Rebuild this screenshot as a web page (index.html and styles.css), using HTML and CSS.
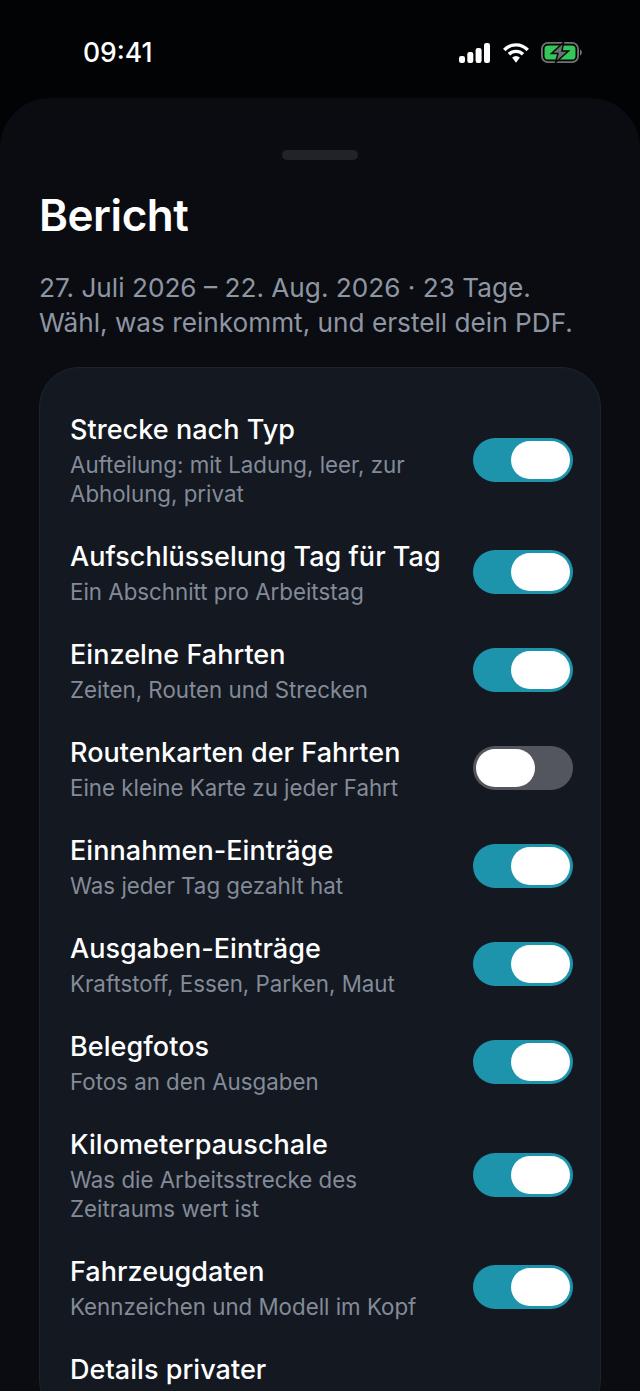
FILE: index.html
```html
<!DOCTYPE html>
<html lang="de">
<head>
    <meta charset="UTF-8">
    <meta name="viewport" content="width=device-width, initial-scale=1.0">
    <title>Bericht</title>
    <link rel="stylesheet" href="styles.css">
</head>
<body>
    <div class="status-bar">
        <span class="clock">09:41</span>
        <div class="status-icons">
            <svg width="31" height="20" viewBox="0 0 31 20">
                <rect x="0" y="13" width="6" height="7" rx="2.2" fill="#fff"/>
                <rect x="8.3" y="9" width="6" height="11" rx="2.2" fill="#fff"/>
                <rect x="16.6" y="5" width="6" height="15" rx="2.2" fill="#fff"/>
                <rect x="25" y="0" width="6" height="20" rx="2.2" fill="#fff"/>
            </svg>
            <svg width="26" height="20" viewBox="0 0 26 20">
                <path d="M1.3 7 A16 16 0 0 1 24.7 7" fill="none" stroke="#fff" stroke-width="3.4"/>
                <path d="M6 11.2 A10 10 0 0 1 20 11.2" fill="none" stroke="#fff" stroke-width="3.4"/>
                <path d="M9.1 14.6 L13 19.8 L16.9 14.6 A6 6 0 0 0 9.1 14.6 Z" fill="#fff"/>
            </svg>
            <svg width="42" height="21" viewBox="0 0 42 21">
                <rect x="0.9" y="0.9" width="36.2" height="19.2" rx="6" fill="none" stroke="#6f7472" stroke-width="1.8"/>
                <rect x="3.5" y="3.5" width="31" height="14" rx="3.6" fill="#34c759"/>
                <path d="M39 7.5 C41.4 8 41.4 13 39 13.5 Z" fill="#6f7472"/>
                <path d="M22.5 0.5 L10.5 11.5 H17 L14.5 20.5 L27.5 9 H21 Z" fill="#6b6f6e" stroke="#0a0a0a" stroke-width="1.5"/>
            </svg>
        </div>
    </div>

    <main class="sheet">
        <div class="handle"></div>
        <h1>Bericht</h1>
        <p class="intro">27. Juli 2026 – 22. Aug. 2026 · 23 Tage.<br>Wähl, was reinkommt, und erstell dein PDF.</p>

        <section class="card">
            <div class="row">
                <div class="row-text">
                    <div class="row-title">Strecke nach Typ</div>
                    <div class="row-sub">Aufteilung: mit Ladung, leer, zur Abholung, privat</div>
                </div>
                <div class="toggle"><div class="knob"></div></div>
            </div>
            <div class="row">
                <div class="row-text">
                    <div class="row-title">Aufschlüsselung Tag für Tag</div>
                    <div class="row-sub">Ein Abschnitt pro Arbeitstag</div>
                </div>
                <div class="toggle"><div class="knob"></div></div>
            </div>
            <div class="row">
                <div class="row-text">
                    <div class="row-title">Einzelne Fahrten</div>
                    <div class="row-sub">Zeiten, Routen und Strecken</div>
                </div>
                <div class="toggle"><div class="knob"></div></div>
            </div>
            <div class="row">
                <div class="row-text">
                    <div class="row-title">Routenkarten der Fahrten</div>
                    <div class="row-sub">Eine kleine Karte zu jeder Fahrt</div>
                </div>
                <div class="toggle off"><div class="knob"></div></div>
            </div>
            <div class="row">
                <div class="row-text">
                    <div class="row-title">Einnahmen-Einträge</div>
                    <div class="row-sub">Was jeder Tag gezahlt hat</div>
                </div>
                <div class="toggle"><div class="knob"></div></div>
            </div>
            <div class="row">
                <div class="row-text">
                    <div class="row-title">Ausgaben-Einträge</div>
                    <div class="row-sub">Kraftstoff, Essen, Parken, Maut</div>
                </div>
                <div class="toggle"><div class="knob"></div></div>
            </div>
            <div class="row">
                <div class="row-text">
                    <div class="row-title">Belegfotos</div>
                    <div class="row-sub">Fotos an den Ausgaben</div>
                </div>
                <div class="toggle"><div class="knob"></div></div>
            </div>
            <div class="row">
                <div class="row-text">
                    <div class="row-title">Kilometerpauschale</div>
                    <div class="row-sub">Was die Arbeitsstrecke des Zeitraums wert ist</div>
                </div>
                <div class="toggle"><div class="knob"></div></div>
            </div>
            <div class="row">
                <div class="row-text">
                    <div class="row-title">Fahrzeugdaten</div>
                    <div class="row-sub">Kennzeichen und Modell im Kopf</div>
                </div>
                <div class="toggle"><div class="knob"></div></div>
            </div>
            <div class="row">
                <div class="row-text">
                    <div class="row-title">Details privater</div>
                </div>
            </div>
        </section>
    </main>
</body>
</html>
```

FILE: styles.css
```css
html, body {
    height: 100%;
}
body {
    margin: 0;
    overflow: hidden;
    background-color: #020305;
    color: #fff;
    font-family: Inter, "Noto Sans", sans-serif;
}
.status-bar {
    height: 98px;
    box-sizing: border-box;
    padding: 36px 57px 0 83px;
    display: flex;
    justify-content: space-between;
    align-items: flex-start;
}
.clock {
    font-size: 26.5px;
    line-height: 32px;
    font-weight: 500;
}
.status-icons {
    display: flex;
    align-items: center;
    gap: 12.5px;
    padding-top: 6px;
}
.sheet {
    background-color: #0a0c11;
    border-radius: 50px 50px 0 0;
    padding: 52px 39px 0;
    min-height: 1293px;
    box-sizing: border-box;
}
.handle {
    width: 76px;
    height: 10px;
    margin: 0 auto;
    border-radius: 5px;
    background-color: #20232a;
}
h1 {
    margin: 29px 0 0;
    font-size: 44px;
    line-height: 52px;
    font-weight: 600;
    letter-spacing: -0.45px;
}
.intro {
    margin: 29px 0 0;
    font-size: 26.2px;
    line-height: 35px;
    color: #8f96a3;
}
.card {
    margin-top: 27px;
    background-color: #131821;
    border: 1px solid #1e232c;
    border-radius: 40px;
    padding: 46px 27px 0 30px;
}
.row {
    display: flex;
    align-items: center;
    justify-content: space-between;
    gap: 20px;
    margin-bottom: 33px;
}
.row-text {
    flex: 1;
    min-width: 0;
}
.row-title {
    font-size: 27px;
    line-height: 32px;
    font-weight: 500;
    letter-spacing: 0.05px;
    color: #fff;
}
.row-sub {
    margin-top: 4px;
    max-width: 360px;
    font-size: 22.3px;
    line-height: 29px;
    color: #848b98;
}
.toggle {
    flex: none;
    width: 100px;
    height: 44px;
    box-sizing: border-box;
    padding: 3px;
    margin-bottom: 3px;
    border-radius: 22px;
    background-color: #1d94ac;
    display: flex;
    justify-content: flex-end;
}
.toggle.off {
    background-color: #54565f;
    justify-content: flex-start;
}
.knob {
    width: 59px;
    height: 38px;
    border-radius: 19px;
    background-color: #fff;
}
```
